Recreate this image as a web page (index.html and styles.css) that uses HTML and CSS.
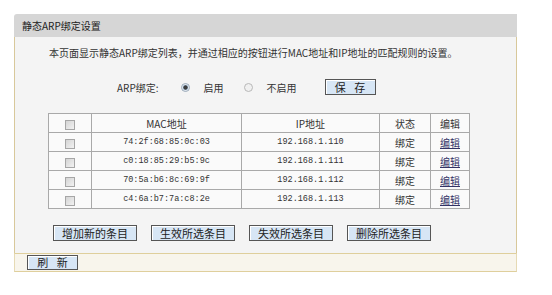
FILE: index.html
```html
<!DOCTYPE html>
<html lang="zh-CN">
<head>
    <meta charset="utf-8">
    <title>静态ARP绑定设置</title>
    <link rel="stylesheet" href="styles.css">
</head>
<body>
    <div class="panel">
        <div class="panel-title">静态ARP绑定设置</div>

        <div class="panel-body">
            <p class="intro">本页面显示静态ARP绑定列表，并通过相应的按钮进行MAC地址和IP地址的匹配规则的设置。</p>

            <div class="arp-row">
                <span class="arp-label">ARP绑定:</span>
                <span class="radio checked"></span>
                <span class="radio-text">启用</span>
                <span class="radio"></span>
                <span class="radio-text last">不启用</span>
                <button class="btn btn-save">保 存</button>
            </div>

            <table class="arp-table">
                <tr>
                    <td class="col-check"><span class="checkbox"></span></td>
                    <td class="col-mac">MAC地址</td>
                    <td class="col-ip">IP地址</td>
                    <td class="col-state">状态</td>
                    <td class="col-edit">编辑</td>
                </tr>
                <tr>
                    <td><span class="checkbox"></span></td>
                    <td class="mono">74:2f:68:85:0c:03</td>
                    <td class="mono">192.168.1.110</td>
                    <td>绑定</td>
                    <td><a href="#">编辑</a></td>
                </tr>
                <tr>
                    <td><span class="checkbox"></span></td>
                    <td class="mono">c0:18:85:29:b5:9c</td>
                    <td class="mono">192.168.1.111</td>
                    <td>绑定</td>
                    <td><a href="#">编辑</a></td>
                </tr>
                <tr>
                    <td><span class="checkbox"></span></td>
                    <td class="mono">70:5a:b6:8c:69:9f</td>
                    <td class="mono">192.168.1.112</td>
                    <td>绑定</td>
                    <td><a href="#">编辑</a></td>
                </tr>
                <tr>
                    <td><span class="checkbox"></span></td>
                    <td class="mono">c4:6a:b7:7a:c8:2e</td>
                    <td class="mono">192.168.1.113</td>
                    <td>绑定</td>
                    <td><a href="#">编辑</a></td>
                </tr>
            </table>

            <div class="actions">
                <button class="btn btn-action">增加新的条目</button>
                <button class="btn btn-action">生效所选条目</button>
                <button class="btn btn-action">失效所选条目</button>
                <button class="btn btn-action">删除所选条目</button>
            </div>
        </div>

        <div class="panel-foot">
            <button class="btn btn-refresh">刷 新</button>
        </div>
    </div>
</body>
</html>
```

FILE: styles.css
```css
body {
    margin: 0;
    background: #ffffff;
    font-family: "Noto Sans CJK SC", sans-serif;
    font-size: 10px;
    color: #333333;
}

.panel {
    width: 503px;
    margin: 14px 0 0 14px;
}

.panel-title {
    height: 23px;
    line-height: 23px;
    padding-left: 8px;
    background: #d6d6d6;
    border-top-left-radius: 3px;
    font-size: 10px;
    color: #222222;
}

.panel-body {
    background: #f4f4f4;
    border-left: 1px solid #d8c89a;
    border-right: 1px solid #d8c89a;
    padding: 9px 0 12px 0;
}

.intro {
    margin: 0 0 0 34px;
    line-height: 14px;
    white-space: nowrap;
}

.arp-row {
    display: flex;
    align-items: center;
    height: 16px;
    margin: 19px 0 0 102px;
    white-space: nowrap;
}

.arp-label {
    margin-right: 22px;
}

.radio {
    width: 9px;
    height: 9px;
    border-radius: 50%;
    border: 1px solid #b8b8b8;
    background: #f0f0f0;
    box-sizing: border-box;
    margin-right: 14px;
}

.radio.checked {
    background: radial-gradient(circle, #3c3c3c 0 1.8px, #9db4cc 2.4px, #eef2f7 3.2px);
    border-color: #9aa9b8;
}

.radio-text {
    margin-right: 20px;
}

.radio-text.last {
    margin-right: 28px;
}

.btn {
    font-family: "Noto Sans CJK SC", sans-serif;
    font-size: 11px;
    color: #222222;
    background: #d7e6f5;
    border: 1px solid #555555;
    box-shadow: inset 1px 1px 0 #ffffff;
    padding: 0;
    line-height: 14px;
}

.btn-save {
    width: 51px;
    height: 16px;
    word-spacing: 6px;
}

.arp-table {
    border-collapse: collapse;
    margin: 18px 0 0 33px;
    background: #fafafa;
}

.arp-table td {
    border: 1px solid #a9a9a9;
    height: 18px;
    padding: 0;
    text-align: center;
}

.col-check { width: 42px; }
.col-mac { width: 149px; }
.col-ip { width: 137px; }
.col-state { width: 50px; }
.col-edit { width: 38px; }

.mono {
    font-family: "Liberation Mono", monospace;
    font-size: 8.5px;
}

.arp-table a {
    color: #333366;
    text-decoration: underline;
}

.checkbox {
    display: inline-block;
    width: 10px;
    height: 10px;
    box-sizing: border-box;
    border: 1px solid #a6a6a6;
    background: linear-gradient(135deg, #d4d4d4, #f2f2f2);
    vertical-align: middle;
}

.actions {
    display: flex;
    gap: 14px;
    margin: 16px 0 0 38px;
}

.btn-action {
    width: 84px;
    height: 16px;
}

.panel-foot {
    height: 17px;
    background: #f8f5ec;
    border-top: 1px solid #dfcf9c;
    border-bottom: 1px solid #dfcf9c;
    border-left: 1px solid #e6dab4;
    border-right: 1px solid #e6dab4;
    display: flex;
    align-items: center;
    padding-left: 12px;
}

.btn-refresh {
    width: 51px;
    height: 15px;
    line-height: 13px;
    word-spacing: 6px;
}
```
